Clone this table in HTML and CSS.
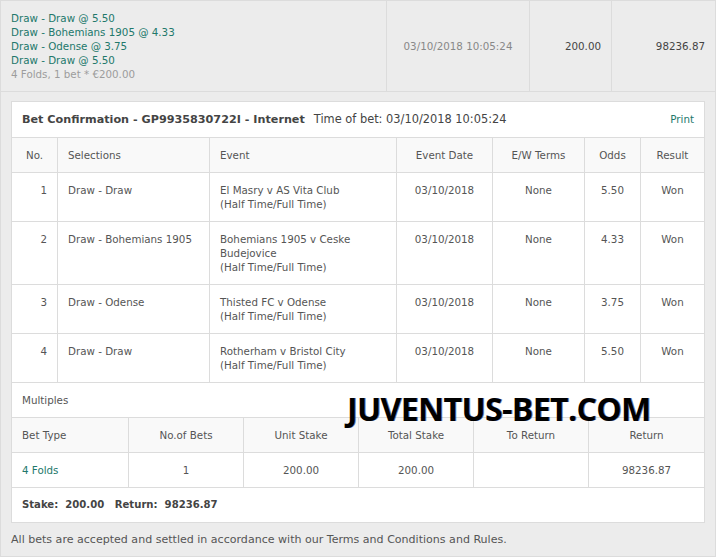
FILE: index.html
```html
<!DOCTYPE html>
<html lang="en">
<head>
    <meta charset="UTF-8">
    <title>Bet Confirmation</title>
    <link rel="stylesheet" href="styles.css">
</head>
<body>
    <div class="bet-page">
        <div class="summary">
            <div class="summary-cell summary-picks">
                <div class="pick">Draw - Draw @ 5.50</div>
                <div class="pick">Draw - Bohemians 1905 @ 4.33</div>
                <div class="pick">Draw - Odense @ 3.75</div>
                <div class="pick">Draw - Draw @ 5.50</div>
                <div class="fold-info">4 Folds, 1 bet * €200.00</div>
            </div>
            <div class="summary-cell summary-date">03/10/2018 10:05:24</div>
            <div class="summary-cell summary-num">200.00</div>
            <div class="summary-cell summary-num">98236.87</div>
        </div>

        <div class="confirm-box">
            <div class="confirm-head">
                <span class="confirm-title">Bet Confirmation - GP9935830722I - Internet</span>
                <span class="confirm-time">Time of bet: 03/10/2018 10:05:24</span>
                <a href="#" class="print-link">Print</a>
            </div>

            <div class="sel-row sel-head">
                <div class="cell center">No.</div>
                <div class="cell">Selections</div>
                <div class="cell">Event</div>
                <div class="cell center">Event Date</div>
                <div class="cell center">E/W Terms</div>
                <div class="cell center">Odds</div>
                <div class="cell center">Result</div>
            </div>
            <div class="sel-row">
                <div class="cell right">1</div>
                <div class="cell">Draw - Draw</div>
                <div class="cell">El Masry v AS Vita Club<br>(Half Time/Full Time)</div>
                <div class="cell center">03/10/2018</div>
                <div class="cell center">None</div>
                <div class="cell center">5.50</div>
                <div class="cell center">Won</div>
            </div>
            <div class="sel-row">
                <div class="cell right">2</div>
                <div class="cell">Draw - Bohemians 1905</div>
                <div class="cell">Bohemians 1905 v Ceske Budejovice<br>(Half Time/Full Time)</div>
                <div class="cell center">03/10/2018</div>
                <div class="cell center">None</div>
                <div class="cell center">4.33</div>
                <div class="cell center">Won</div>
            </div>
            <div class="sel-row">
                <div class="cell right">3</div>
                <div class="cell">Draw - Odense</div>
                <div class="cell">Thisted FC v Odense<br>(Half Time/Full Time)</div>
                <div class="cell center">03/10/2018</div>
                <div class="cell center">None</div>
                <div class="cell center">3.75</div>
                <div class="cell center">Won</div>
            </div>
            <div class="sel-row">
                <div class="cell right">4</div>
                <div class="cell">Draw - Draw</div>
                <div class="cell">Rotherham v Bristol City<br>(Half Time/Full Time)</div>
                <div class="cell center">03/10/2018</div>
                <div class="cell center">None</div>
                <div class="cell center">5.50</div>
                <div class="cell center">Won</div>
            </div>

            <div class="multiples-label">Multiples</div>

            <div class="multi-row sel-head">
                <div class="cell">Bet Type</div>
                <div class="cell center">No.of Bets</div>
                <div class="cell center">Unit Stake</div>
                <div class="cell center">Total Stake</div>
                <div class="cell center">To Return</div>
                <div class="cell center">Return</div>
            </div>
            <div class="multi-row">
                <div class="cell bet-type">4 Folds</div>
                <div class="cell center">1</div>
                <div class="cell center">200.00</div>
                <div class="cell center">200.00</div>
                <div class="cell center"></div>
                <div class="cell center">98236.87</div>
            </div>

            <div class="totals">Stake:&nbsp; 200.00 &nbsp; Return:&nbsp; 98236.87</div>

            <div class="watermark">JUVENTUS-BET.COM</div>
        </div>

        <p class="terms">All bets are accepted and settled in accordance with our Terms and Conditions and Rules.</p>
    </div>
</body>
</html>
```

FILE: styles.css
```css
body {
    margin: 0;
    background: #ffffff;
    font-family: 'DejaVu Sans', Verdana, sans-serif;
    font-size: 10.3px;
    line-height: 14px;
    color: #555555;
}

.bet-page {
    width: 716px;
    box-sizing: border-box;
    border: 1px solid #dcdcdc;
    background-color: #ececec;
}

/* top summary strip */
.summary {
    display: grid;
    grid-template-columns: 385px 143px 82px 1fr;
    border-bottom: 1px solid #dcdcdc;
}

.summary-cell {
    padding: 10px;
    display: flex;
    flex-direction: column;
    justify-content: center;
}

.summary-cell + .summary-cell {
    border-left: 1px solid #dcdcdc;
}

.summary-picks {
    justify-content: flex-start;
}

.pick {
    color: #22786b;
}

.fold-info {
    color: #9c9c9c;
}

.summary-date {
    color: #888888;
    text-align: center;
}

.summary-num {
    color: #444444;
    text-align: right;
}

/* confirmation box */
.confirm-box {
    position: relative;
    margin: 9px 10px 0 10px;
    background-color: #ffffff;
    border: 1px solid #dcdcdc;
}

.confirm-head {
    display: flex;
    align-items: baseline;
    padding: 10px;
    border-bottom: 1px solid #dcdcdc;
    color: #444444;
}

.confirm-title {
    font-weight: bold;
    font-size: 11.2px;
}

.confirm-time {
    margin-left: 9px;
    font-size: 11.4px;
}

.print-link {
    margin-left: auto;
    color: #22786b;
    text-decoration: none;
}

.sel-row,
.multi-row {
    display: grid;
    border-bottom: 1px solid #dcdcdc;
}

.sel-row {
    grid-template-columns: 45px 152px 187px 96px 92px 56px 64px;
}

.multi-row {
    grid-template-columns: 116px 115px 115px 115px 115px 116px;
}

.sel-head {
    background-color: #f9f9f9;
}

.cell {
    padding: 10px;
}

.cell + .cell {
    border-left: 1px solid #dcdcdc;
}

.center { text-align: center; }
.right { text-align: right; }

.bet-type {
    color: #22786b;
}

.multiples-label {
    padding: 10px;
    border-bottom: 1px solid #dcdcdc;
}

.totals {
    padding: 10px;
    font-weight: bold;
    font-size: 10.1px;
    color: #444444;
}

.watermark {
    position: absolute;
    left: 335px;
    top: 291px;
    font-family: 'Open Sans', sans-serif;
    font-weight: bold;
    font-size: 32px;
    letter-spacing: -0.6px;
    line-height: 1;
    color: #000000;
    text-shadow: 1px 0 0 rgba(20, 40, 120, 0.6);
    white-space: nowrap;
}

.terms {
    margin: 0;
    padding: 10px 10px 9px 10px;
    font-size: 11.05px;
}
```
